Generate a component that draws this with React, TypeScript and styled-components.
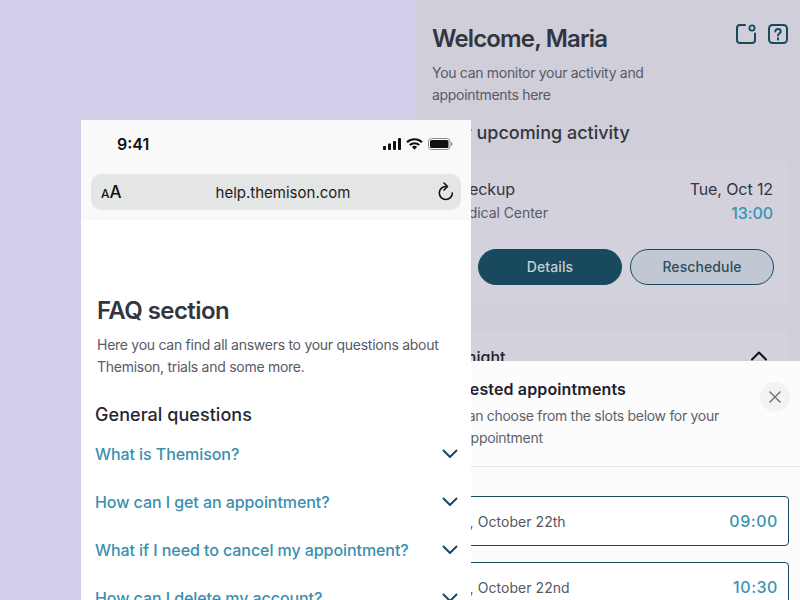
import React from "react";
import styled, { createGlobalStyle } from "styled-components";

const Global = createGlobalStyle`
  html, body { margin: 0; padding: 0; width: 800px; height: 600px; overflow: hidden; background: #d3cfeb; }
  * { box-sizing: border-box; }
`;

const Canvas = styled.div`
  position: relative;
  width: 800px;
  height: 600px;
  overflow: hidden;
  background: #d3cfeb;
  font-family: Inter, "Liberation Sans", sans-serif;
`;

const Dashboard = styled.section`
  position: absolute;
  left: 416px;
  top: 0;
  width: 384px;
  height: 600px;
  background: #cfced9;
  padding: 22px 11px 0 16px;
  display: flex;
  flex-direction: column;
`;
const TopRow = styled.div`
  display: flex;
  justify-content: space-between;
  align-items: flex-start;
`;
const Welcome = styled.h1`
  margin: 0;
  font-size: 24px;
  line-height: 33px;
  font-weight: 600;
  letter-spacing: -0.85px;
  color: #333640;
`;
const IconRow = styled.div`
  display: flex;
  gap: 11px;
  margin-top: 1px;
`;
const Lead = styled.p`
  margin: 7px 0 0;
  width: 240px;
  font-size: 14px;
  line-height: 22px;
  letter-spacing: -0.3px;
  color: #585a66;
`;
const SectionTitle = styled.h2`
  margin: 14px 0 0;
  font-size: 18px;
  line-height: 26px;
  font-weight: 500;
  letter-spacing: 0;
  color: #333640;
`;
const Card = styled.article`
  margin-top: 15px;
  height: 143px;
  background: #d3d1dc;
  padding: 16px;
  display: flex;
  flex-direction: column;
`;
const CardRow = styled.div`
  display: flex;
  justify-content: space-between;
  align-items: center;
`;
const CardTitle = styled.span`
  font-size: 16px;
  line-height: 24px;
  letter-spacing: -0.1px;
  color: #333640;
`;
const CardSub = styled.span`
  font-size: 14px;
  line-height: 24px;
  letter-spacing: -0.05px;
  color: #585a66;
`;
const CardTime = styled.span`
  font-size: 16px;
  line-height: 24px;
  font-weight: 500;
  letter-spacing: -0.1px;
  color: #3a93b5;
`;
const Actions = styled.div`
  margin: 24px -1px 0 0;
  display: flex;
  justify-content: flex-end;
  gap: 8px;
`;
const Pill = styled.button<{ $filled?: boolean }>`
  width: 144px;
  height: 36px;
  border-radius: 18px;
  border: 1px solid #19495f;
  background: ${(p) => (p.$filled ? "#19495f" : "#c2c8d3")};
  color: ${(p) => (p.$filled ? "#c5ced6" : "#2f4c5e")};
  font: 500 14px Inter, sans-serif;
  letter-spacing: 0.1px;
  padding: 0 0 1px;
`;
const SecondCard = styled.article`
  margin-top: 26px;
  height: 60px;
  background: #d3d1dc;
  padding: 15px 21px 0 16px;
  display: flex;
  justify-content: space-between;
  align-items: flex-start;
`;
const SecondTitle = styled.span`
  font-size: 16px;
  line-height: 24px;
  font-weight: 500;
  color: #222;
`;
const ChevronUp = styled.svg`
  margin-top: 5px;
`;

const Sheet = styled.section`
  position: absolute;
  left: 416px;
  top: 361px;
  width: 384px;
  height: 239px;
  background: #fcfcfc;
  display: flex;
  flex-direction: column;
`;
const SheetHead = styled.header`
  height: 106px;
  flex: none;
  padding: 16px 10px 0 16px;
  border-bottom: 1px solid #e8e8e8;
  display: flex;
  justify-content: space-between;
  align-items: flex-start;
`;
const SheetTitle = styled.h3`
  margin: 0 0 0 -3px;
  font-size: 16px;
  line-height: 24px;
  font-weight: 600;
  letter-spacing: 0.14px;
  color: #1f2129;
`;
const SheetLead = styled.p`
  margin: 4px 0 0;
  width: 300px;
  font-size: 14px;
  line-height: 22px;
  letter-spacing: -0.3px;
  color: #5f616b;
`;
const Close = styled.button`
  width: 30px;
  height: 30px;
  margin-top: 5px;
  border-radius: 50%;
  border: 0;
  padding: 0;
  background: #f3f3f3;
  display: flex;
  align-items: center;
  justify-content: center;
`;
const SlotList = styled.div`
  padding: 29px 11px 0 16px;
  display: flex;
  flex-direction: column;
  gap: 16px;
`;
const Slot = styled.div`
  height: 50px;
  flex: none;
  border: 1px solid #19495f;
  border-radius: 4px;
  background: #fff;
  padding: 0 10px 0 12px;
  display: flex;
  justify-content: space-between;
  align-items: center;
`;
const SlotDate = styled.span`
  font-size: 14px;
  letter-spacing: 0.05px;
  color: #555762;
`;
const SlotTime = styled.span`
  font-size: 16px;
  font-weight: 500;
  letter-spacing: 0.55px;
  color: #3a93b5;
`;

const Phone = styled.section`
  position: absolute;
  left: 81px;
  top: 120px;
  width: 390px;
  height: 480px;
  background: #fff;
  display: flex;
  flex-direction: column;
  overflow: hidden;
`;
const Chrome = styled.header`
  height: 100px;
  flex: none;
  background: #f9f9f9;
  padding: 0 10px;
  display: flex;
  flex-direction: column;
`;
const StatusBar = styled.div`
  height: 54px;
  flex: none;
  padding: 0 8px 6px 26px;
  display: flex;
  justify-content: space-between;
  align-items: center;
`;
const Clock = styled.span`
  font-size: 16px;
  font-weight: 600;
  color: #111;
`;
const StatusIcons = styled.div`
  display: flex;
  align-items: center;
  gap: 5px;
`;
const AddressBar = styled.div`
  height: 36px;
  border-radius: 10px;
  background: #e4e5e5;
  padding: 0 6px 0 10px;
  display: grid;
  grid-template-columns: 50px 1fr 40px;
  align-items: center;
`;
const TextSize = styled.span`
  font-size: 17px;
  font-weight: 500;
  color: #111;
  line-height: 1;
  small { font-size: 12px; }
`;
const Url = styled.span`
  text-align: center;
  font-size: 15px;
  color: #1c1c1e;
`;
const Reload = styled.span`
  display: flex;
  justify-content: flex-end;
`;
const Faq = styled.div`
  padding: 74px 13px 0 14px;
  display: flex;
  flex-direction: column;
`;
const FaqTitle = styled.h1`
  margin: 0 0 0 2px;
  font-size: 24px;
  line-height: 33px;
  font-weight: 600;
  letter-spacing: -0.58px;
  color: #333640;
`;
const FaqLead = styled.p`
  margin: 7px 0 0 2px;
  width: 350px;
  font-size: 14px;
  line-height: 22px;
  letter-spacing: -0.27px;
  color: #585a66;
`;
const FaqHeading = styled.h2`
  margin: 24px 0 0;
  font-size: 18px;
  line-height: 26px;
  font-weight: 500;
  letter-spacing: 0.05px;
  color: #25272f;
`;
const FaqList = styled.div`
  margin-top: 14px;
  display: flex;
  flex-direction: column;
  gap: 24px;
`;
const FaqItem = styled.div`
  height: 24px;
  flex: none;
  display: flex;
  justify-content: space-between;
  align-items: center;
`;
const Question = styled.span`
  font-size: 16px;
  line-height: 24px;
  font-weight: 500;
  letter-spacing: -0.07px;
  color: #3a8fb0;
`;

const Chevron = () => (
  <svg width="16" height="10" viewBox="0 0 16 10" fill="none" stroke="#19495f" strokeWidth="2" strokeLinecap="round" strokeLinejoin="round">
    <path d="M1.500 1.500 8 8l6.500-6.500" />
  </svg>
);

const questions = [
  "What is Themison?",
  "How can I get an appointment?",
  "What if I need to cancel my appointment?",
  "How can I delete my account?",
];

export default function App() {
  return (
    <Canvas>
      <Global />
      <Dashboard>
        <TopRow>
          <Welcome>Welcome, Maria</Welcome>
          <IconRow>
            <svg width="22" height="22" viewBox="0 0 22 22" fill="none" stroke="#19495f" strokeWidth="2">
              <path d="M10 2H5a3 3 0 0 0-3 3v12a3 3 0 0 0 3 3h12a3 3 0 0 0 3-3v-6.500" strokeLinecap="round" />
              <circle cx="17" cy="5" r="2.600" strokeWidth="1.800" />
            </svg>
            <svg width="21" height="22" viewBox="0 0 21 22" fill="none" stroke="#19495f" strokeWidth="2">
              <rect x="1" y="2" width="18" height="18" rx="3.500" />
              <path d="M7.300 8.600c0-1.600 1.200-2.600 2.700-2.600s2.700 1 2.700 2.400c0 2-2.700 2.100-2.700 4" strokeLinecap="round" />
              <path d="M10 15.200v1.200" strokeLinecap="round" />
            </svg>
          </IconRow>
        </TopRow>
        <Lead>You can monitor your activity and appointments here</Lead>
        <SectionTitle>Your upcoming activity</SectionTitle>
        <Card>
          <CardRow>
            <CardTitle>Checkup</CardTitle>
            <CardTitle>Tue, Oct 12</CardTitle>
          </CardRow>
          <CardRow>
            <CardSub>Medical Center</CardSub>
            <CardTime>13:00</CardTime>
          </CardRow>
          <Actions>
            <Pill $filled>Details</Pill>
            <Pill>Reschedule</Pill>
          </Actions>
        </Card>
        <SecondCard>
          <SecondTitle>Tonight</SecondTitle>
          <ChevronUp width="18" height="11" viewBox="0 0 18 11" fill="none" stroke="#111" strokeWidth="2" strokeLinecap="round" strokeLinejoin="round">
            <path d="M2 9.500 9 2.500l7 7" />
          </ChevronUp>
        </SecondCard>
      </Dashboard>

      <Sheet>
        <SheetHead>
          <div>
            <SheetTitle>Suggested appointments</SheetTitle>
            <SheetLead>You can choose from the slots below for your next appointment</SheetLead>
          </div>
          <Close aria-label="Close">
            <svg width="12" height="12" viewBox="0 0 12 12" fill="none" stroke="#757575" strokeWidth="1.500" strokeLinecap="round">
              <path d="M1 1l10 10M11 1 1 11" />
            </svg>
          </Close>
        </SheetHead>
        <SlotList>
          <Slot>
            <SlotDate>Tue, October 22th</SlotDate>
            <SlotTime>09:00</SlotTime>
          </Slot>
          <Slot>
            <SlotDate>Tue, October 22nd</SlotDate>
            <SlotTime>10:30</SlotTime>
          </Slot>
        </SlotList>
      </Sheet>

      <Phone>
        <Chrome>
          <StatusBar>
            <Clock>9:41</Clock>
            <StatusIcons>
              <svg width="18" height="12" viewBox="0 0 18 12" fill="#111">
                <rect x="0" y="8" width="3" height="4" rx="0.700" />
                <rect x="5" y="5.500" width="3" height="6.500" rx="0.700" />
                <rect x="10" y="3" width="3" height="9" rx="0.700" />
                <rect x="15" y="0" width="3" height="12" rx="0.700" />
              </svg>
              <svg width="17" height="12" viewBox="0 0 17 12" fill="none" stroke="#111" strokeWidth="2.100">
                <path d="M1 4.300a10.800 10.800 0 0 1 15 0" />
                <path d="M3.700 7.100a7 7 0 0 1 9.600 0" />
                <path d="M8.500 11.800 5.900 9.100a3.600 3.600 0 0 1 5.200 0Z" fill="#111" stroke="none" />
              </svg>
              <svg width="25" height="12" viewBox="0 0 25 12" fill="none">
                <rect x="0.500" y="0.500" width="21.500" height="11" rx="3" stroke="#8d8d8d" />
                <rect x="2" y="2" width="18.500" height="8" rx="1.600" fill="#111" />
                <path d="M23 4v4c.8-.3 1.500-1 1.500-2s-.7-1.700-1.500-2Z" fill="#8d8d8d" />
              </svg>
            </StatusIcons>
          </StatusBar>
          <AddressBar>
            <TextSize><small>A</small>A</TextSize>
            <Url>help.themison.com</Url>
            <Reload>
              <svg width="18" height="20" viewBox="0 0 18 20" fill="none" stroke="#111" strokeWidth="1.600" strokeLinecap="round" strokeLinejoin="round">
                <path d="M8.800 4.500A6.500 6.500 0 1 0 15.300 11" />
                <path d="M7 1 10.500 4.500 7 8" />
              </svg>
            </Reload>
          </AddressBar>
        </Chrome>
        <Faq>
          <FaqTitle>FAQ section</FaqTitle>
          <FaqLead>Here you can find all answers to your questions about Themison, trials and some more.</FaqLead>
          <FaqHeading>General questions</FaqHeading>
          <FaqList>
            {questions.map((q) => (
              <FaqItem key={q}>
                <Question>{q}</Question>
                <Chevron />
              </FaqItem>
            ))}
          </FaqList>
        </Faq>
      </Phone>
    </Canvas>
  );
}
